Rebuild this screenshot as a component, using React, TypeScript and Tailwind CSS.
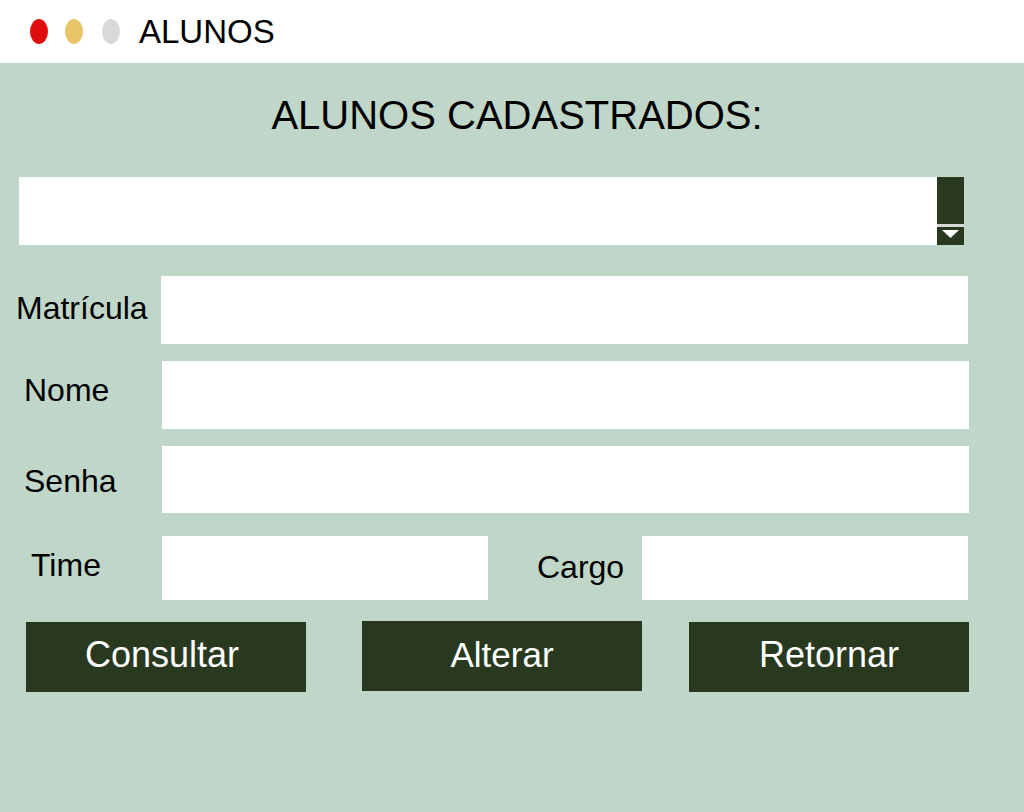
export default function App() {
  return (
    <div className="w-[1024px] h-[812px] flex flex-col font-['Liberation_Sans',Arial,sans-serif] text-black">
      {/* barra de titulo */}
      <div className="h-[63px] bg-white flex items-center pl-[30px]">
        <span className="w-[18px] h-[25px] rounded-[50%] bg-[#e10c0c]" />
        <span className="w-[18px] h-[25px] rounded-[50%] bg-[#e8c466] ml-[17px]" />
        <span className="w-[18px] h-[25px] rounded-[50%] bg-[#d9d9d9] ml-[19px]" />
        <span className="ml-[19px] text-[33px] leading-none">ALUNOS</span>
      </div>

      <div className="flex-1 bg-[#bfd6c9] pt-[32px]">
        <h1 className="text-center text-[40px] leading-[40px] h-[40px] pl-[10px]">ALUNOS CADASTRADOS:</h1>

        {/* lista */}
        <div className="mt-[42px] ml-[19px] w-[945px] h-[68px] flex">
          <div className="flex-1 bg-white" />
          <div className="w-[27px] flex flex-col">
            <div className="h-[47px] bg-[#29391f]" />
            <div className="h-[3px] bg-[#d9d9d9]" />
            <div className="flex-1 bg-[#29391f] flex justify-center pt-[3px]">
              <svg width="17" height="8" viewBox="0 0 17 8">
                <polygon points="0,0 17,0 8.5,8" fill="white" />
              </svg>
            </div>
          </div>
        </div>

        {/* campos */}
        <div className="mt-[31px] h-[68px] flex items-center">
          <label className="w-[161px] pl-[16px] text-[32px] leading-none mb-[5px]">Matrícula</label>
          <div className="w-[807px] h-full bg-white" />
        </div>
        <div className="mt-[17px] h-[68px] flex items-center">
          <label className="w-[162px] pl-[24px] text-[32px] leading-none mb-[10px]">Nome</label>
          <div className="w-[807px] h-full bg-white" />
        </div>
        <div className="mt-[17px] h-[67px] flex items-center">
          <label className="w-[162px] pl-[24px] text-[32px] leading-none mt-[2px]">Senha</label>
          <div className="w-[807px] h-full bg-white" />
        </div>
        <div className="mt-[23px] h-[64px] flex items-center">
          <label className="w-[162px] pl-[31px] text-[32px] leading-none mb-[6px]">Time</label>
          <div className="w-[326px] h-full bg-white" />
          <label className="w-[154px] pl-[49px] text-[32px] leading-none mb-[2px]">Cargo</label>
          <div className="w-[326px] h-full bg-white" />
        </div>

        {/* botoes */}
        <div className="mt-[22px] flex items-start">
          <button className="ml-[26px] w-[280px] h-[70px] bg-[#29391f] text-white text-[36px] leading-none pb-[4px] pr-[8px]">
            Consultar
          </button>
          <button className="ml-[56px] -mt-[1px] w-[280px] h-[70px] bg-[#29391f] text-white text-[35px] leading-none pb-[4px]">
            Alterar
          </button>
          <button className="ml-[47px] w-[280px] h-[70px] bg-[#29391f] text-white text-[36px] leading-none pb-[4px]">
            Retornar
          </button>
        </div>
      </div>
    </div>
  );
}
